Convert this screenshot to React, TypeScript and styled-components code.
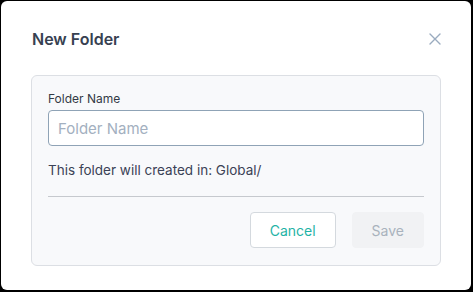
import styled, { createGlobalStyle } from 'styled-components';

const GlobalStyle = createGlobalStyle`
    html, body {
        margin: 0;
        padding: 0;
        background: #000;
    }
    body {
        font-family: Inter, "Noto Sans", sans-serif;
    }
`;

export default function App() {
    return (
        <>
            <GlobalStyle />
            <Modal>
                <Header>
                    <Title>New Folder</Title>
                    <CloseButton aria-label="Close">
                        <svg width="12" height="12" viewBox="0 0 12 12" fill="none">
                            <path d="M1 1L11 11M11 1L1 11" stroke="currentColor" strokeWidth="1.4" strokeLinecap="round" />
                        </svg>
                    </CloseButton>
                </Header>

                <Card>
                    <Label htmlFor="folder-name">Folder Name</Label>
                    <Input id="folder-name" placeholder="Folder Name" />
                    <Hint>This folder will created in: Global/</Hint>
                    <Divider />
                    <Actions>
                        <Button>Cancel</Button>
                        <Button $variant="disabled" disabled>Save</Button>
                    </Actions>
                </Card>
            </Modal>
        </>
    );
}

// Styled Components
const Modal = styled.div`
    box-sizing: border-box;
    width: 470px;
    height: 289px;
    margin: 1px 1px 2px 1px;
    padding: 0 30px;
    background: #fff;
    border-radius: 6px;
    display: flex;
    flex-direction: column;
`;

const Header = styled.div`
    height: 74px;
    display: flex;
    align-items: center;
    justify-content: space-between;
    padding: 2px 0 0 1px;
    box-sizing: border-box;
`;

const Title = styled.h2`
    margin: 0;
    font-size: 16px;
    font-weight: 600;
    color: #374151;
`;

const CloseButton = styled.button`
    border: none;
    background: none;
    padding: 0;
    color: #9aabbf;
    display: flex;
    cursor: pointer;
`;

const Card = styled.div`
    box-sizing: border-box;
    height: 191px;
    padding: 15px 16px 16px;
    background: #f8f9fb;
    border: 1px solid #dcdfe4;
    border-radius: 6px;
    display: flex;
    flex-direction: column;
`;

const Label = styled.label`
    font-size: 12px;
    line-height: 16px;
    color: #333a45;
    margin-bottom: 3px;
`;

const Input = styled.input`
    box-sizing: border-box;
    height: 36px;
    width: 100%;
    padding: 0 9px;
    border: 1px solid #8fa3b6;
    border-radius: 4px;
    background: #fff;
    font-family: inherit;
    font-size: 15px;
    color: #374151;
    outline: none;

    &::placeholder {
        color: #a3b0c0;
    }
`;

const Hint = styled.p`
    margin: 15px 0 0;
    font-size: 13.5px;
    line-height: 18px;
    color: #3b4256;
`;

const Divider = styled.hr`
    margin: 17px 0 0;
    border: none;
    border-top: 1px solid #c6c9ce;
`;

const Actions = styled.div`
    margin-top: 15px;
    display: flex;
    justify-content: flex-end;
    gap: 16px;
`;

const Button = styled.button<{ $variant?: 'disabled' }>`
    box-sizing: border-box;
    height: 36px;
    min-width: 72px;
    padding: 0 19px;
    border-radius: 4px;
    font-family: inherit;
    font-size: 14px;
    border: 1px solid ${(p) => (p.$variant === 'disabled' ? '#f1f2f4' : '#d4d9de')};
    background: ${(p) => (p.$variant === 'disabled' ? '#f1f2f4' : '#fff')};
    color: ${(p) => (p.$variant === 'disabled' ? '#a9b2bd' : '#1fb3a6')};
    cursor: ${(p) => (p.$variant === 'disabled' ? 'default' : 'pointer')};
`;
